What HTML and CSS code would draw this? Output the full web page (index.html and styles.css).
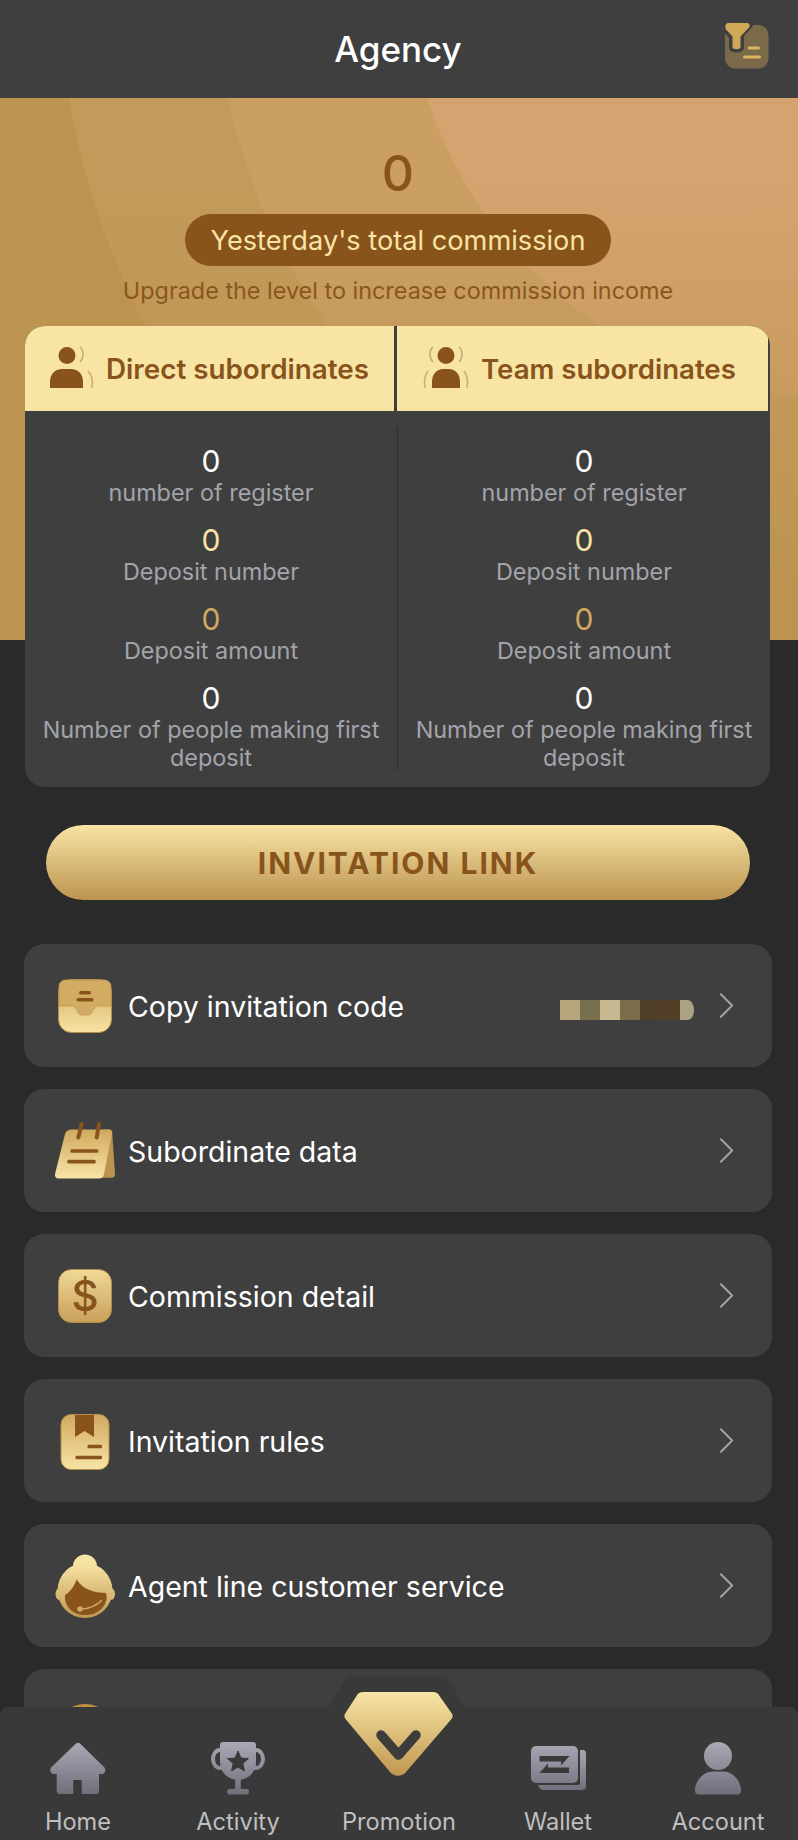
FILE: index.html
```html
<!DOCTYPE html>
<html lang="en">
<head>
<meta charset="utf-8">
<title>Agency</title>
<link rel="stylesheet" href="styles.css">
</head>
<body>
<svg class="defs" width="0" height="0" aria-hidden="true">
  <defs>
    <linearGradient id="goldUp" x1="0" y1="0" x2="0" y2="1"><stop offset="0" stop-color="#d0a95f"/><stop offset="1" stop-color="#f8e4a5"/></linearGradient>
    <linearGradient id="goldDown" x1="0" y1="0" x2="0" y2="1"><stop offset="0" stop-color="#f8e4a5"/><stop offset="1" stop-color="#c0974f"/></linearGradient>
    <linearGradient id="goldSoft" x1="0" y1="0" x2="0" y2="1"><stop offset="0" stop-color="#f0d998"/><stop offset="1" stop-color="#c8a05a"/></linearGradient>
    <linearGradient id="grey" x1="0" y1="0" x2="0" y2="1"><stop offset="0" stop-color="#a9a9b5"/><stop offset="1" stop-color="#6f707c"/></linearGradient>
    <linearGradient id="greyHandle" gradientUnits="userSpaceOnUse" x1="0" y1="0" x2="0" y2="52"><stop offset="0" stop-color="#a9a9b5"/><stop offset="1" stop-color="#6f707c"/></linearGradient>
  </defs>
</svg>
<div class="page">
  <header class="topbar">
    <h1 class="title">Agency</h1>
    <svg class="filter-icon" viewBox="0 0 44 46">
      <rect x="0" y="2" width="43.500" height="43.500" rx="10" fill="#7a6a4a"/>
      <path d="M-2 -2H28V3L19 13V25C19 31 4 31 4 25V15L-2 8Z" fill="#3f3f3f"/>
      <path d="M3 0H22C24.500 0 25.500 2.500 24 4.500L15.500 13.500V24C15.500 27 7.500 27 7.500 24V13.500L1 6.500C-.5 4 .5 0 3 0Z" fill="#cfa858"/>
      <rect x="22.500" y="23.500" width="12.500" height="3" rx="1.500" fill="#dcb563"/>
      <rect x="18" y="32.500" width="18" height="3" rx="1.500" fill="#dcb563"/>
    </svg>
  </header>

  <section class="hero">
    <div class="hero-total">0</div>
    <div class="hero-pill">Yesterday's total commission</div>
    <p class="hero-tip">Upgrade the level to increase commission income</p>

    <div class="stats">
      <div class="tabs">
        <div class="tab">
          <svg class="tab-icon" viewBox="0 0 46 46">
            <circle cx="18" cy="9.500" r="8.500" fill="#88541c"/>
            <path d="M1 42V36c0-9 6-13 12-13h9c7 0 12 5 12 13v6z" fill="#88541c"/>
            <path d="M31 1c4 3 4 11 0 15" fill="none" stroke="#c9ae7a" stroke-width="1.600"/>
            <path d="M39 25c4 4 5 11 4 17" fill="none" stroke="#c9ae7a" stroke-width="1.600"/>
          </svg>
          <span>Direct subordinates</span>
        </div>
        <div class="tab tab-team">
          <svg class="tab-icon" viewBox="0 0 46 46">
            <circle cx="23" cy="9.500" r="8.500" fill="#88541c"/>
            <path d="M9 42V36c0-8 5-13 11-13h6c6 0 11 5 11 13v6z" fill="#88541c"/>
            <path d="M10 1C6 4 6 12 10 16M36 1c4 3 4 11 0 15" fill="none" stroke="#c9ae7a" stroke-width="1.600"/>
            <path d="M5 25C2 29 1 36 2 42M41 25c3 4 4 11 3 17" fill="none" stroke="#c9ae7a" stroke-width="1.600"/>
          </svg>
          <span>Team subordinates</span>
        </div>
      </div>
      <div class="columns">
        <div class="column">
          <div class="stat"><div class="num white">0</div><div class="label">number of register</div></div>
          <div class="stat"><div class="num cream">0</div><div class="label">Deposit number</div></div>
          <div class="stat"><div class="num gold">0</div><div class="label">Deposit amount</div></div>
          <div class="stat"><div class="num white">0</div><div class="label">Number of people making first deposit</div></div>
        </div>
        <div class="column column-right">
          <div class="stat"><div class="num white">0</div><div class="label">number of register</div></div>
          <div class="stat"><div class="num cream">0</div><div class="label">Deposit number</div></div>
          <div class="stat"><div class="num gold">0</div><div class="label">Deposit amount</div></div>
          <div class="stat"><div class="num white">0</div><div class="label">Number of people making first deposit</div></div>
        </div>
      </div>
    </div>
  </section>

  <button class="invite">INVITATION LINK</button>

  <ul class="menu">
    <li class="row">
      <svg class="row-icon" viewBox="0 0 60 60">
        <rect x="4.500" y="3.500" width="53" height="53" rx="13" fill="url(#goldUp)" stroke="#b48d4a" stroke-width="1"/>
        <path d="M5 10.500c0-4 3-6.500 7-6.500h38c4 0 7 2.500 7 6.500V30H45c-4 0-5 2-7 6-1 2-2 3-4 3h-6c-2 0-3-1-4-3-2-4-3-6-7-6H5z" fill="#d2ac62" stroke="#bd9850" stroke-width=".8"/>
        <rect x="25" y="15" width="12" height="3.400" rx="1.700" fill="#88541c"/>
        <rect x="22.500" y="22" width="17" height="3.400" rx="1.700" fill="#88541c"/>
      </svg>
      <span class="row-text">Copy invitation code</span>
      <span class="mosaic"><i class="m1"></i><i class="m2"></i><i class="m3"></i><i class="m4"></i><i class="m5"></i><i class="m6"></i><i class="m7"></i></span>
      <svg class="chevron" viewBox="0 0 16 28"><path d="M2 2l12 12L2 26" fill="none" stroke="#a3a3ab" stroke-width="2" stroke-linecap="round" stroke-linejoin="round"/></svg>
    </li>
    <li class="row">
      <svg class="row-icon" viewBox="0 0 60 60">
        <path d="M50 8.500h5c1.500 0 3 1 3.200 3L61 53c0 2.500-1 3.700-3.500 3.700H42z" fill="#bc9450"/>
        <path d="M18 8.500h37c2 0 3.200 1.500 3 3.500l-8 41c-.5 3-2.500 4.500-5 4.500H4.500C2 57.500.5 55.500 1 53l10-40c.8-3 3.500-4.500 7-4.500z" fill="url(#goldUp)"/>
        <path d="M27.700 3l-3.400 13.500M45 3l-2.300 13.500" stroke="#88541c" stroke-width="4" stroke-linecap="round"/>
        <path d="M18 30h24.700M15 40.700h25" stroke="#88541c" stroke-width="3.700" stroke-linecap="round"/>
      </svg>
      <span class="row-text">Subordinate data</span>
      <svg class="chevron" viewBox="0 0 16 28"><path d="M2 2l12 12L2 26" fill="none" stroke="#a3a3ab" stroke-width="2" stroke-linecap="round" stroke-linejoin="round"/></svg>
    </li>
    <li class="row">
      <svg class="row-icon" viewBox="0 0 60 60">
        <rect x="4.500" y="3.500" width="53" height="53" rx="13" fill="url(#goldSoft)" stroke="#b48d4a" stroke-width="1"/>
        <text x="31" y="45" class="dollar">$</text>
      </svg>
      <span class="row-text">Commission detail</span>
      <svg class="chevron" viewBox="0 0 16 28"><path d="M2 2l12 12L2 26" fill="none" stroke="#a3a3ab" stroke-width="2" stroke-linecap="round" stroke-linejoin="round"/></svg>
    </li>
    <li class="row">
      <svg class="row-icon" viewBox="0 0 60 60">
        <rect x="7" y="3.500" width="48" height="55" rx="10" fill="url(#goldUp)" stroke="#b48d4a" stroke-width="1"/>
        <path d="M21 4h19v22l-9.500-6L21 26z" fill="#88541c"/>
        <path d="M35 35.500h11.500M23 46.500h23.500" stroke="#88541c" stroke-width="3.400" stroke-linecap="round"/>
      </svg>
      <span class="row-text">Invitation rules</span>
      <svg class="chevron" viewBox="0 0 16 28"><path d="M2 2l12 12L2 26" fill="none" stroke="#a3a3ab" stroke-width="2" stroke-linecap="round" stroke-linejoin="round"/></svg>
    </li>
    <li class="row">
      <svg class="row-icon row-icon-tall" viewBox="0 0 62 66">
        <circle cx="31" cy="13.500" r="12" fill="#f6e2a2"/>
        <ellipse cx="5.500" cy="41" rx="4" ry="6" fill="#d9ba77"/>
        <ellipse cx="57" cy="41" rx="4" ry="6" fill="#d9ba77"/>
        <circle cx="31" cy="37.500" r="27.500" fill="url(#goldDown)"/>
        <path d="M11 42C15 40 20 34 22.700 26.500C28 36 40 40 52 40C53 44 53 46 52 48C50 56 42 62 31 62C20 62 12 55 11 46Z" fill="#88541c"/>
        <path d="M27 56c8 0 15-3 21-9" fill="none" stroke="#d0a95f" stroke-width="1.600"/>
        <circle cx="26" cy="56" r="2.800" fill="#d0a95f"/>
      </svg>
      <span class="row-text">Agent line customer service</span>
      <svg class="chevron" viewBox="0 0 16 28"><path d="M2 2l12 12L2 26" fill="none" stroke="#a3a3ab" stroke-width="2" stroke-linecap="round" stroke-linejoin="round"/></svg>
    </li>
    <li class="row">
      <svg class="row-icon" viewBox="0 0 60 60">
        <circle cx="31" cy="33" r="30" fill="#c18f3e"/>
      </svg>
    </li>
  </ul>

  <nav class="tabbar">
    <svg class="bump" viewBox="0 0 137 32"><path d="M0 32L15 6c2.500-4 5-6 9-6h89c4 0 6.500 2 9 6l15 26z" fill="#393939"/></svg>
    <a class="nav-item">
      <svg class="nav-icon" viewBox="0 0 56 54">
        <path d="M28 .7c.8 0 1.500.3 2 .9L54.500 25.500c1.800 2 .8 6-2 6.500H49V49c0 2-1 3-3 3H31.700V38H23.300V52H10c-2 0-3.300-1-3.300-3V32H3c-2.800-.5-3.500-4.500-2-6.500L26 1.600c.5-.6 1.200-.9 2-.9z" fill="url(#grey)"/>
      </svg>
      <span>Home</span>
    </a>
    <a class="nav-item">
      <svg class="nav-icon" viewBox="0 0 56 54">
        <ellipse cx="10" cy="17" rx="7" ry="9" fill="none" stroke="url(#greyHandle)" stroke-width="4"/>
        <ellipse cx="46" cy="17" rx="7" ry="9" fill="none" stroke="url(#greyHandle)" stroke-width="4"/>
        <path d="M13 0H43a3 3 0 0 1 3 3V20C46 31 37 38 28 38S10 31 10 20V3a3 3 0 0 1 3-3Z" fill="url(#greyHandle)"/>
        <rect x="25.200" y="36" width="5.600" height="12" fill="url(#greyHandle)"/>
        <rect x="17" y="47" width="22" height="5.600" rx="2.800" fill="url(#greyHandle)"/>
        <path d="M28 9L30.900 16L38.500 16.600L32.800 21.500L34.500 28.900L28 25L21.500 28.900L23.200 21.500L17.500 16.600L25.100 16Z" fill="#393939" stroke="#393939" stroke-width="1" stroke-linejoin="round"/>
      </svg>
      <span>Activity</span>
    </a>
    <a class="nav-item nav-center">
      <svg class="gem" viewBox="0 0 109 85">
        <path d="M19 0h70c3 0 5 1 6.500 4l12 17c1.500 2 1.500 4 0 6L62 80c-4 5-12 5-16 0L1.500 27c-1.500-2-1.500-4 0-6l11-17C14 1 16 0 19 0z" fill="url(#goldDown)"/>
        <path d="M37 43l17.500 20L72 43" fill="none" stroke="#3c3c3c" stroke-width="9.500" stroke-linecap="round" stroke-linejoin="round"/>
      </svg>
      <span>Promotion</span>
    </a>
    <a class="nav-item">
      <svg class="nav-icon" viewBox="0 0 56 54">
        <path d="M50 8h3c2 0 3 1.500 3 3.500V44c0 2.500-1.500 4-4 4H14c-3 0-5-2-6-5h40c1.500 0 2-1 2-2z" fill="url(#grey)"/>
        <rect x="1" y="4" width="47" height="37" rx="5" fill="url(#greyHandle)"/>
        <path d="M9.500 14H39.500L31 23.500V19.500H9.500ZM9.500 31L18 21.500V25.500H39V31Z" fill="#393939"/>
      </svg>
      <span>Wallet</span>
    </a>
    <a class="nav-item">
      <svg class="nav-icon" viewBox="0 0 56 54">
        <circle cx="28" cy="14" r="14" fill="url(#greyHandle)"/>
        <path d="M9 52.500c-3 0-4-1.500-4-4C5 38 14 29.500 23 29.500h10C42 29.500 51 38 51 48.500c0 2.500-1 4-4 4z" fill="url(#greyHandle)"/>
      </svg>
      <span>Account</span>
    </a>
  </nav>
</div>
</body>
</html>
```

FILE: styles.css
```css
* { box-sizing: border-box; }
html, body { margin: 0; padding: 0; }
body {
  background: #2a2a2a;
  font-family: Inter, "Liberation Sans", sans-serif;
  width: 798px;
  height: 1840px;
  overflow: hidden;
}
.defs { display: block; height: 0; }
.page { position: relative; width: 798px; height: 1840px; overflow: hidden; }

.topbar {
  height: 98px;
  padding-right: 2px;
  background: #3f3f3f;
  display: flex;
  align-items: center;
  justify-content: center;
  position: relative;
}
.title { margin: 0; font-size: 35px; font-weight: 500; color: #fff; }
.filter-icon { position: absolute; left: 725px; top: 23px; width: 44px; height: 46px; overflow: hidden; }

.hero {
  padding: 45px 2px 0 0;
  background:
    linear-gradient(180deg, rgba(188,148,80,0) 15%, #bc9450 90%) 0 0 / 100% 542px no-repeat,
    radial-gradient(circle at 840px -133px, #d5a370 0 433px, #cb9f64 434px 626px, #c39a59 627px 782px, #bc9450 783px) 0 0 / 100% 542px no-repeat;
  display: flex;
  flex-direction: column;
  align-items: center;
}
.hero-total { font-size: 50px; line-height: 60px; font-weight: 500; color: #88541c; }
.hero-pill {
  margin-top: 11px;
  width: 426px;
  height: 52px;
  line-height: 54px;
  border-radius: 26px;
  background: #88541c;
  color: #f8e4a5;
  font-size: 27.200px;
  text-align: center;
}
.hero-tip { margin: 11px 0 0; font-size: 23.400px; line-height: 28px; color: #8a561e; }

.stats {
  margin: 21px 0 0 25px;
  align-self: flex-start;
  width: 745px;
  background: #3f3f3f;
  border-radius: 20px;
  overflow: hidden;
  flex: none;
}
.tabs { display: flex; height: 85px; gap: 3px; padding-right: 2px; }
.tab {
  flex: 1;
  background: #f8e4a5;
  color: #88541c;
  font-size: 27.800px;
  font-weight: 600;
  display: flex;
  align-items: center;
  gap: 11px;
  padding-left: 24px;
}
.tab-team { padding-left: 26px; gap: 12px; font-size: 27.600px; }
.tab-icon { width: 46px; height: 46px; flex: none; }
.columns { display: flex; margin: 16px 0; height: 344px; }
.column { flex: 1; padding: 18px 14px 0; text-align: center; }
.column-right { border-left: 1px solid #2e2e2e; }
.stat { height: 79px; }
.stat:last-child { height: auto; }
.num { font-size: 30px; line-height: 32px; }
.white { color: #fff; }
.cream { color: #f8e4a5; }
.gold { color: #d0a95f; }
.label { margin-top: 2px; font-size: 23.400px; line-height: 28px; color: #a3a3ab; }

.invite {
  display: block;
  margin: 38px 0 0 46px;
  width: 704px;
  height: 75px;
  padding: 0;
  border: 0;
  border-radius: 38px;
  background: linear-gradient(180deg, #f8e4a5, #bc9450);
  color: #88541c;
  font-family: inherit;
  font-size: 30px;
  font-weight: 700;
  letter-spacing: 2px;
}

.menu { list-style: none; margin: 44px 0 0 24px; padding: 0; width: 748px; display: flex; flex-direction: column; gap: 22px; }
.row {
  height: 123px;
  flex: none;
  background: #3f3f3f;
  border-radius: 20px;
  display: flex;
  align-items: center;
  padding-left: 30px;
  padding-right: 38px;
  color: #fff;
  font-size: 28.500px;
}
.row-icon { width: 60px; height: 60px; flex: none; overflow: visible; }
.row-icon-tall { width: 62px; height: 66px; margin-right: -2px; }
.row-text { margin-left: 14px; padding-top: 2px; flex: 1; }
.dollar { font-family: Inter, sans-serif; font-size: 42px; font-weight: 500; fill: #88541c; text-anchor: middle; }
.mosaic { display: flex; width: 134px; height: 20px; margin: 9px 25px 0 0; border-radius: 0 6px 6px 0 / 0 10px 10px 0; overflow: hidden; }
.mosaic i { flex: 1; display: block; }
.m1 { background: #b7a67c; }
.m2 { background: #77704f; }
.m3 { background: #c8b88f; }
.m4 { background: #7a6d4a; }
.m5 { background: #4f3f28; }
.m6 { background: #533f27; }
.mosaic .m7 { background: #ada084; flex: 0.700; }
.chevron { width: 15px; height: 27px; flex: none; }

.tabbar {
  position: absolute;
  left: 0;
  top: 1707px;
  width: 798px;
  height: 133px;
  background: #393939;
  border-radius: 8px 8px 0 0;
  display: grid;
  grid-template-columns: 156px 164px 158px 160px 160px;
}
.bump { position: absolute; left: 328px; top: -31px; width: 137px; height: 32px; }
.nav-item {
  display: flex;
  flex-direction: column;
  align-items: center;
  justify-content: flex-end;
  padding-bottom: 4px;
  gap: 12px;
  color: #bfbfbf;
  font-size: 23.600px;
  line-height: 28px;
  position: relative;
}
.nav-icon { width: 56px; height: 54px; flex: none; }
.gem { position: absolute; left: 24px; top: -15px; width: 109px; height: 85px; }
```
